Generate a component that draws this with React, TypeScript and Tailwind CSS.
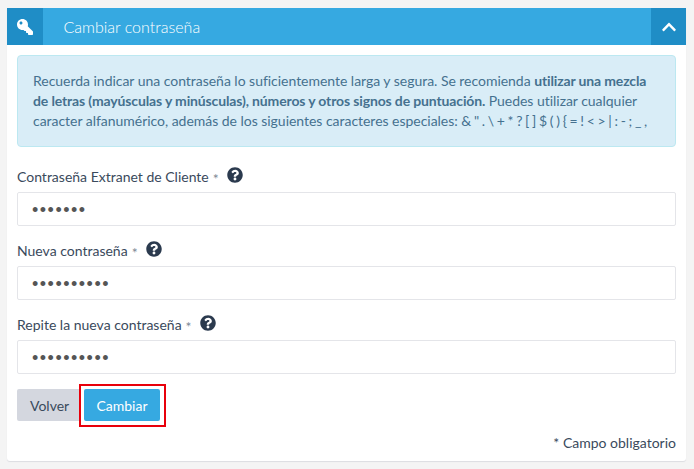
import { FaChevronUp, FaKey, FaQuestionCircle } from "react-icons/fa";

const fields = [
  { label: "Contraseña Extranet de Cliente", value: "1234567" },
  { label: "Nueva contraseña", value: "1234567890" },
  { label: "Repite la nueva contraseña", value: "1234567890" },
];

const App = () => {
  return (
    <div className="h-[469px] bg-[#f4f4f4] pl-[7px] pr-2 pt-2 font-['Lato',sans-serif] text-[14px] text-[#3a4a5c]">
      <div className="h-[453px] rounded-b-[3px] bg-white shadow-[0_1px_1px_#dcdde1]">
        <div className="flex h-[37px] items-stretch rounded-t-[2px] bg-[#36a9e1] text-white">
          <div className="flex w-9 items-center justify-center bg-[#1f8dc6]">
            <FaKey className="-scale-x-100 text-[16px]" />
          </div>
          <div className="flex-1 pl-[20.5px] text-[16px] font-light leading-[37px]">Cambiar contraseña</div>
          <div className="flex w-[35px] items-center justify-center bg-[#1f8dc6]">
            <FaChevronUp className="text-[16px]" />
          </div>
        </div>

        <div className="px-2.5 pt-2.5">
          <div className="h-[92px] rounded-[4px] border border-[#bce8f1] bg-[#d9edf7] pl-[15px] pr-6 pt-[15px] text-[14px] leading-[20px] tracking-[-0.03px] text-[#45718f]">
            Recuerda indicar una contraseña lo suficientemente larga y segura. Se recomienda{" "}
            <b className="font-bold tracking-[-0.14px]">utilizar una mezcla de letras (mayúsculas y minúsculas), números y otros signos de puntuación.</b>{" "}
            Puedes utilizar cualquier caracter alfanumérico, además de los siguientes caracteres especiales:{" "}
            <span className="[word-spacing:-0.85px]">&amp; " . \ + * ? [ ] $ ( ) {"{"} = ! &lt; &gt; | : - ; _ ,</span>
          </div>

          <div className="mt-[18px] flex flex-col gap-[13px]">
            {fields.map((field) => (
              <div key={field.label}>
                <label className="flex h-[27px] items-start leading-[20px]">
                  <span className="pt-[2px]">{field.label}</span>
                  <span className="ml-1 pt-1 text-[#7d8a96]">*</span>
                  <FaQuestionCircle className="ml-2 mt-[2px] text-[16px] text-[#2b3a4e]" />
                </label>
                <input
                  type="password"
                  readOnly
                  value={field.value}
                  className="block h-[34px] w-full rounded-[2px] border border-[#e4e5e9] bg-white px-[14px] pt-[3px] font-['Liberation_Sans',sans-serif] text-[18px] tracking-[1.5px] text-[#555]"
                />
              </div>
            ))}
          </div>

          <div className="mt-[10px] flex items-start">
            <button className="mt-[5px] h-8 w-[62px] rounded-l-[2px] bg-[#d4d7df] pl-[13px] text-left text-[14px] text-[#3a4a5c]">Volver</button>
            <div className="border-2 border-[#e8000b] pb-1 pl-[3px] pr-1 pt-[3px]">
              <button className="block h-8 w-[76px] rounded-[2px] bg-[#36a9e1] text-[14px] text-white">Cambiar</button>
            </div>
          </div>

          <p className="mt-1.5 text-right text-[14px] leading-5">* Campo obligatorio</p>
        </div>
      </div>
    </div>
  );
};

export default App;
